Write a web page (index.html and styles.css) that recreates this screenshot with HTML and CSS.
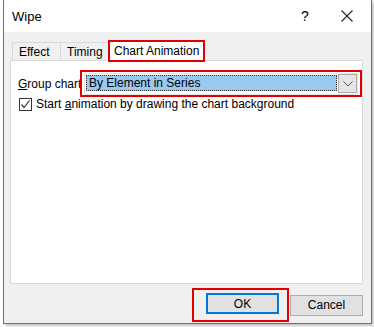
FILE: index.html
```html
<!DOCTYPE html>
<html>
<head>
<meta charset="utf-8">
<link rel="stylesheet" href="styles.css">
</head>
<body>
<div class="window">
  <div class="titlebar">
    <span class="title">Wipe</span>
    <span class="help">?</span>
    <span class="close">
      <svg width="12" height="12" viewBox="0 0 12 12"><path d="M0.5 0.5 L11.5 11.5 M11.5 0.5 L0.5 11.5" stroke="#222" stroke-width="1.1" fill="none"/></svg>
    </span>
  </div>
  <div class="content">
    <div class="tabs">
      <div class="tab">Effect</div>
      <div class="tab">Timing</div>
      <div class="tab active">Chart Animation</div>
    </div>
    <div class="panel">
      <div class="row">
        <span class="label"><u>G</u>roup chart</span>
        <div class="annot combo-annot">
          <div class="combo">
            <div class="field"><span>By Element in Series</span></div>
            <div class="dropbtn">
              <svg width="10" height="6" viewBox="0 0 10 6"><path d="M0.5 0.5 L5 5 L9.5 0.5" stroke="#555" stroke-width="1" fill="none"/></svg>
            </div>
          </div>
        </div>
      </div>
      <div class="check-row">
        <span class="checkbox">
          <svg width="11" height="11" viewBox="0 0 11 11"><path d="M1.5 5.5 L4 8.5 L9.5 1.5" stroke="#333" stroke-width="1.2" fill="none"/></svg>
        </span>
        <span class="check-label">Start <u>a</u>nimation by drawing the chart background</span>
      </div>
    </div>
    <div class="buttons">
      <div class="annot ok-annot"><button class="btn default">OK</button></div>
      <button class="btn">Cancel</button>
    </div>
  </div>
</div>
</body>
</html>
```

FILE: styles.css
```css
html, body {
  margin: 0;
  padding: 0;
  background: #ffffff;
  width: 374px;
  height: 327px;
  overflow: hidden;
  font-family: "Liberation Sans", Arial, sans-serif;
  font-size: 12px;
  color: #000;
}
.window {
  margin-left: 3px;
  width: 367px;
  height: 323px;
  border: 1px solid #6f6f6f;
  border-top: none;
  display: flex;
  flex-direction: column;
  background: #f0f0f0;
  box-shadow: 2px 2px 3px rgba(0,0,0,0.25);
}
.titlebar {
  height: 32px;
  background: #fff;
  display: flex;
  align-items: center;
  padding-left: 8px;
  flex: none;
}
.title {
  font-size: 13px;
  flex: 1;
}
.help {
  width: 10px;
  margin-right: 30px;
  font-size: 14px;
}
.close {
  width: 12px;
  margin-right: 18px;
  display: flex;
}
.content {
  flex: 1;
  display: flex;
  flex-direction: column;
  padding: 8px 8px 0 6px;
}
.tabs {
  display: flex;
  padding-left: 2px;
  height: 20px;
  align-items: flex-end;
  position: relative;
  z-index: 1;
}
.tab {
  height: 17px;
  line-height: 18px;
  padding: 0 6px;
  border: 1px solid #d9d9d9;
  border-bottom: none;
  background: #f0f0f0;
  margin-right: -1px;
}
.tab:first-child {
  width: 35px;
}
.tab:nth-child(2) {
  width: 36px;
}
.tab.active {
  background: #fff;
  border: 2px solid #e00000;
  height: 18px;
  line-height: 18px;
  margin-bottom: -2px;
  margin-left: -1px;
  padding: 0 4px;
  width: auto;
}
.panel {
  height: 222px;
  background: #fff;
  border: 1px solid #d9d9d9;
  padding: 0 0 0 7px;
}
.row {
  display: flex;
  align-items: center;
  margin-top: 9px;
}
.label {
  flex: none;
  width: 64px;
  white-space: nowrap;
}
.annot {
  border: 2px solid #e00000;
}
.combo-annot {
  flex: none;
  width: 274px;
  height: 21px;
  padding: 1px 2px 1px 2px;
  margin-left: -2px;
  margin-right: -1px;
}
.combo {
  display: flex;
  height: 20px;
  border: 1px solid #e3e3e3;
}
.field {
  flex: 1;
  background: #99c9ef;
  border: 1px dotted #333;
  margin: 1px 1px 3px 1px;
  display: flex;
  align-items: center;
  padding-left: 2px;
  line-height: 13px;
}
.dropbtn {
  width: 17px;
  border: 1px solid #adadad;
  background: #e5e5e5;
  margin: 0 0 1px 0;
  display: flex;
  align-items: center;
  justify-content: center;
}
.check-row {
  display: flex;
  align-items: center;
  margin-top: 0px;
}
.checkbox {
  width: 11px;
  height: 11px;
  border: 1px solid #333;
  background: #fff;
  margin: 0 4px 0 1px;
  display: flex;
}
.buttons {
  display: flex;
  justify-content: flex-end;
  align-items: center;
  margin-top: 4px;
  padding-right: 0;
}
.btn {
  font-family: inherit;
  font-size: 12px;
  height: 21px;
  width: 73px;
  background: #e1e1e1;
  border: 1px solid #adadad;
  padding: 0;
  color: #000;
}
.ok-annot {
  padding: 3px 8px 6px 12px;
  margin-right: 1px;
}
.btn.default {
  border: 2px solid #0078d7;
}
```
